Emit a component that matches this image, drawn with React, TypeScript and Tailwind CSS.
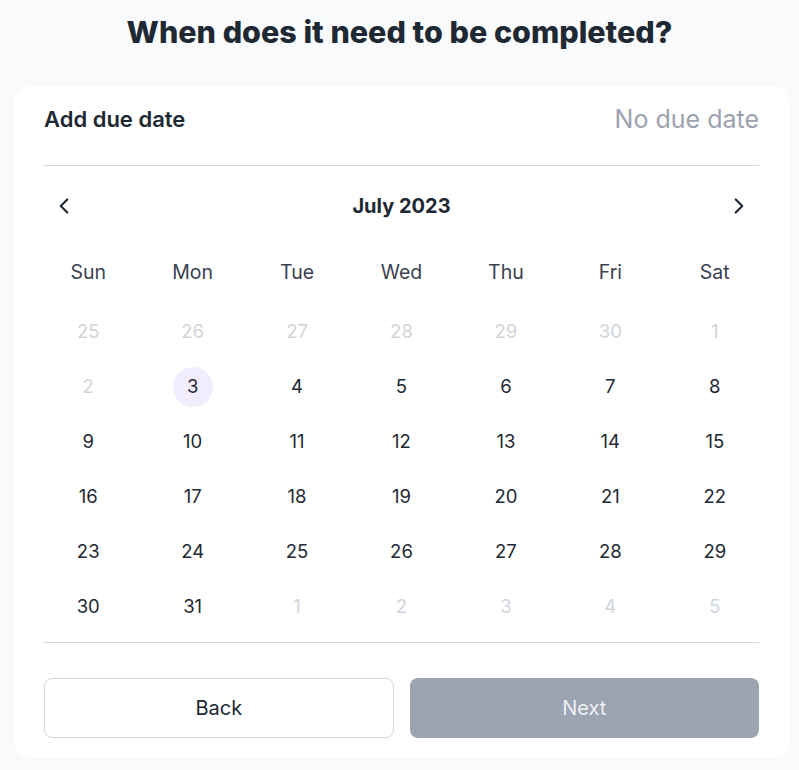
import { ChevronLeft, ChevronRight } from "lucide-react";

const weekDays = ["Sun", "Mon", "Tue", "Wed", "Thu", "Fri", "Sat"];

const weeks: { day: number; muted: boolean }[][] = [
  [25, 26, 27, 28, 29, 30, 1].map((d) => ({ day: d, muted: true })),
  [2, 3, 4, 5, 6, 7, 8].map((d) => ({ day: d, muted: d === 2 })),
  [9, 10, 11, 12, 13, 14, 15].map((d) => ({ day: d, muted: false })),
  [16, 17, 18, 19, 20, 21, 22].map((d) => ({ day: d, muted: false })),
  [23, 24, 25, 26, 27, 28, 29].map((d) => ({ day: d, muted: false })),
  [30, 31, 1, 2, 3, 4, 5].map((d, i) => ({ day: d, muted: i > 1 })),
];

const App = () => {
  const selected = 3;
  return (
    <div
      className="min-h-screen bg-[#f8fafc] px-[14px] pb-[13px]"
      style={{ fontFamily: "Inter, 'Noto Sans', sans-serif" }}
    >
      <h1 className="flex h-[62px] items-center justify-center pt-[1px] text-[30.5px] font-extrabold text-[#1e2933]">
        When does it need to be completed?
      </h1>
      <div className="mt-[24px] w-[775px] rounded-2xl bg-white px-[30px] pt-[19px] pb-[20px]">
        <div className="flex items-center justify-between border-b border-[#d4d9de] pb-[32px]">
          <span className="text-[22px] leading-7 font-semibold text-[#1e2933]">
            Add due date
          </span>
          <span className="text-[25px] leading-7 text-[#9ca3af]">
            No due date
          </span>
        </div>

        <div className="mt-[20px] flex h-10 items-center justify-between">
          <button className="flex h-10 w-10 items-center justify-center text-[#1e2933]">
            <ChevronLeft size={26} strokeWidth={2} />
          </button>
          <span className="text-[20px] font-bold text-[#1e2933]">July 2023</span>
          <button className="flex h-10 w-10 items-center justify-center text-[#1e2933]">
            <ChevronRight size={26} strokeWidth={2} />
          </button>
        </div>

        <div className="-mx-2">
          <div className="mt-[19px] grid h-[56px] grid-cols-7 items-center">
            {weekDays.map((w) => (
              <span key={w} className="text-center text-[19.5px] text-[#3a4150]">
                {w}
              </span>
            ))}
          </div>
          <div className="mt-[3px]">
            {weeks.map((week, wi) => (
              <div key={wi} className="grid h-[55px] grid-cols-7 items-center">
                {week.map((c, ci) => (
                  <div key={ci} className="flex justify-center">
                    <span
                      className={
                        "flex h-10 w-10 items-center justify-center rounded-full text-[18.5px] " +
                        (c.muted
                          ? "text-[#d1d5db]"
                          : c.day === selected && wi === 1
                            ? "bg-[#f1edfd] text-[#1e2933]"
                            : "text-[#1e2933]")
                      }
                    >
                      {c.day}
                    </span>
                  </div>
                ))}
              </div>
            ))}
          </div>
        </div>

        <div className="mt-[8px] border-t border-[#d4d9de]" />

        <div className="mt-[35px] grid grid-cols-2 gap-4">
          <button className="h-[60px] rounded-lg border border-[#d6d8de] bg-white text-[20px] text-[#1e2933]">
            Back
          </button>
          <button className="h-[60px] rounded-lg bg-[#9ca3b1] text-[20px] text-[#eef0f3]">
            Next
          </button>
        </div>
      </div>
    </div>
  );
};

export default App;
